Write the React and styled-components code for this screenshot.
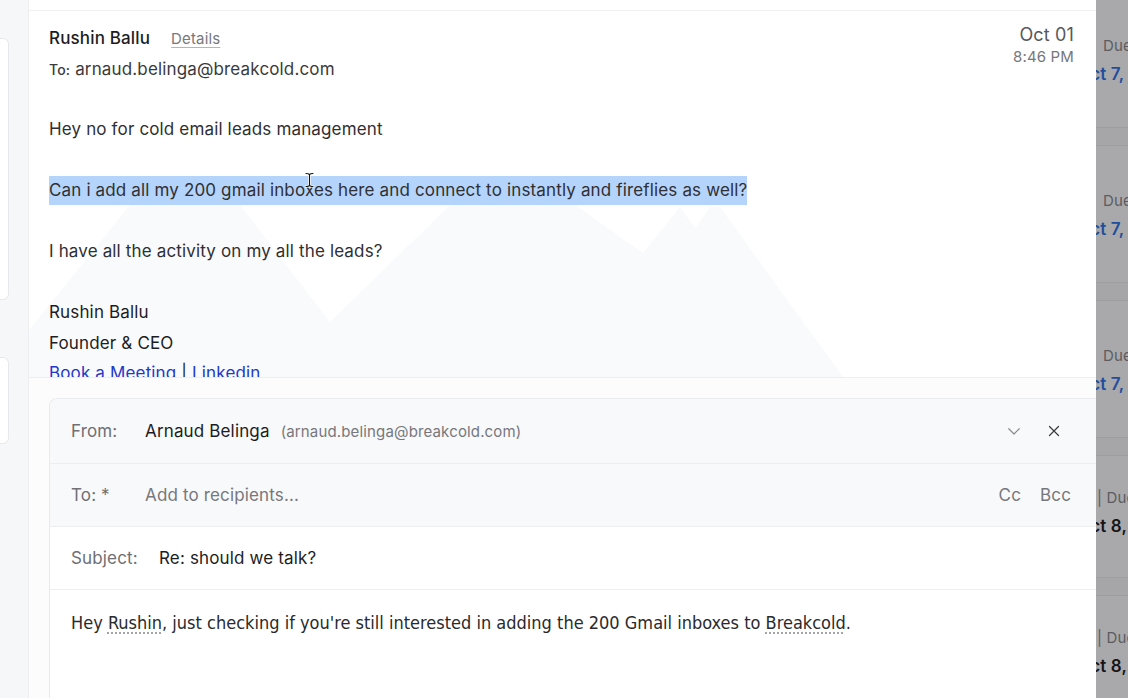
import React from "react";
import styled, { createGlobalStyle } from "styled-components";

const mountains = encodeURIComponent(
  `<svg xmlns="http://www.w3.org/2000/svg" width="1067" height="366"><polygon fill="#f9fafb" points="0,366 0,319 101,194 211,194 301,311 421,194 546,194 614,242 651,196 666,217 681,196 691,196 814,366"/></svg>`
);

const sideCards = [
  { height: 138, top: 46, indent: 7, due: "Due", date: "Oct 7, 2024", blue: true },
  { height: 138, top: 46, indent: 7, due: "Due", date: "Oct 7, 2024", blue: true },
  { height: 138, top: 46, indent: 7, due: "Due", date: "Oct 7, 2024", blue: true },
  { height: 123, top: 33, indent: 1, due: "| Due", date: "Oct 8, 2024", blue: false },
  { height: 123, top: 33, indent: 1, due: "| Due", date: "Oct 8, 2024", blue: false },
];

class App extends React.Component {
  render() {
    return (
      <>
        <GlobalStyle />
        <Page>
          <Gutter>
            <GutterCard height={260} />
            <GutterCard height={85} />
          </Gutter>
          <Main>
            <TopStrip />
            <Message>
              <Header>
                <div>
                  <Sender>
                    <SenderName>Rushin Ballu</SenderName>
                    <Details>Details</Details>
                  </Sender>
                  <ToLine>
                    <ToLabel>To:</ToLabel> arnaud.belinga@breakcold.com
                  </ToLine>
                </div>
                <DateBlock>
                  <DateText>Oct 01</DateText>
                  <TimeText>8:46 PM</TimeText>
                </DateBlock>
              </Header>
              <Body>
                <Para>Hey no for cold email leads management</Para>
                <Para>
                  <Selected>
                    Can i add all my 200 gmail inboxes here and connect to
                    instantly and fireflies as well?
                    <Cursor>
                      <svg width="9" height="16" viewBox="0 0 9 16" fill="none" strokeLinecap="round">
                        <path d="M1 1.5c1.5 0 3.5 0 3.5 1.5v10c0 1.5-2 1.5-3.5 1.5M8 1.5c-1.5 0-3.5 0-3.5 1.5v10c0 1.5 2 1.5 3.5 1.5" stroke="#ffffff" strokeWidth="2.6" />
                        <path d="M1 1.5c1.5 0 3.5 0 3.5 1.5v10c0 1.5-2 1.5-3.5 1.5M8 1.5c-1.5 0-3.5 0-3.5 1.5v10c0 1.5 2 1.5 3.5 1.5" stroke="#111111" strokeWidth="1.1" />
                      </svg>
                    </Cursor>
                  </Selected>
                </Para>
                <Para>I have all the activity on my all the leads?</Para>
                <Signature>
                  <div>Rushin Ballu</div>
                  <div>Founder &amp; CEO</div>
                  <div>
                    <Link>Book a Meeting</Link> | <Link>Linkedin</Link>
                  </div>
                </Signature>
              </Body>
            </Message>
            <Compose>
              <Card>
                <Field height={64} tint>
                  <Label width={74}>From:</Label>
                  <Value>Arnaud Belinga</Value>
                  <FromEmail>(arnaud.belinga@breakcold.com)</FromEmail>
                  <Actions>
                    <IconButton>
                      <svg width="18" height="18" viewBox="0 0 24 24" fill="none" stroke="#8c8c90" strokeWidth="1.6" strokeLinecap="round" strokeLinejoin="round">
                        <path d="M5 9l7 7 7-7" />
                      </svg>
                    </IconButton>
                    <IconButton>
                      <svg width="18" height="18" viewBox="0 0 24 24" fill="none" stroke="#3a3a3c" strokeWidth="1.6" strokeLinecap="round">
                        <path d="M18 6L6 18M6 6l12 12" />
                      </svg>
                    </IconButton>
                  </Actions>
                </Field>
                <Field height={62} tint>
                  <Label width={74}>To: *</Label>
                  <Placeholder>Add to recipients...</Placeholder>
                  <CopyLinks>
                    <span>Cc</span>
                    <span>Bcc</span>
                  </CopyLinks>
                </Field>
                <Field height={62}>
                  <Label width={88}>Subject:</Label>
                  <Value>Re: should we talk?</Value>
                </Field>
                <Draft>
                  Hey <Misspelled>Rushin</Misspelled>, just checking if you're
                  still interested in adding the 200 Gmail inboxes to{" "}
                  <Misspelled>Breakcold</Misspelled>.
                </Draft>
              </Card>
            </Compose>
          </Main>
          <Sidebar>
            {sideCards.map((c, i) => (
              <SideCard key={i} height={c.height} top={c.top}>
                <Due indent={c.indent}>{c.due}</Due>
                <DueDate blue={c.blue}>{c.date}</DueDate>
              </SideCard>
            ))}
          </Sidebar>
        </Page>
      </>
    );
  }
}

const GlobalStyle = createGlobalStyle`
  html, body {
    margin: 0;
    padding: 0;
    background: #ffffff;
  }
  body {
    font-family: "Inter", "Noto Sans", sans-serif;
    letter-spacing: 0.15px;
    -webkit-font-smoothing: antialiased;
  }
`;

const Page = styled.div`
  display: flex;
  width: 1128px;
  height: 698px;
  overflow: hidden;
`;

const Gutter = styled.div`
  width: 28px;
  flex-shrink: 0;
  background: #f6f7f9;
  display: flex;
  flex-direction: column;
  gap: 57px;
  padding-top: 38px;
  box-sizing: border-box;
`;

const GutterCard = styled.div`
  width: 8px;
  height: ${(p) => p.height}px;
  background: #ffffff;
  border: 1px solid #e6e8eb;
  border-left: none;
  border-radius: 0 6px 6px 0;
`;

const Main = styled.div`
  width: 1068px;
  flex-shrink: 0;
  display: flex;
  flex-direction: column;
  border-left: 1px solid #eceef1;
  box-sizing: border-box;
  background: #ffffff;
  overflow: hidden;
`;

const TopStrip = styled.div`
  height: 10px;
  border-bottom: 1px solid #eef0f2;
`;

const Message = styled.div`
  height: 366px;
  flex-shrink: 0;
  overflow: hidden;
  padding: 0 22px 0 20px;
  border-bottom: 1px solid #eceef1;
  background: #ffffff url("data:image/svg+xml,${mountains}") no-repeat 0 0;
`;

const Header = styled.div`
  display: flex;
  justify-content: space-between;
  align-items: flex-start;
  padding-top: 17px;
`;

const Sender = styled.div`
  display: flex;
  align-items: baseline;
  line-height: 20px;
`;

const SenderName = styled.span`
  font-size: 17px;
  font-weight: 500;
  color: #1d1d1f;
`;

const Details = styled.span`
  margin-left: 21px;
  font-size: 15px;
  color: #77777c;
  text-decoration: underline;
  text-underline-offset: 3px;
  text-decoration-color: #b5b5b9;
`;

const ToLine = styled.div`
  margin-top: 10px;
  line-height: 20px;
  font-size: 17px;
  color: #3a3a3c;
`;

const ToLabel = styled.span`
  font-size: 14px;
  font-weight: 500;
`;

const DateBlock = styled.div`
  text-align: right;
  margin-top: -4px;
  line-height: 22px;
`;

const DateText = styled.div`
  font-size: 18px;
  color: #58585c;
`;

const TimeText = styled.div`
  font-size: 15px;
  color: #77777c;
`;

const Body = styled.div`
  margin-top: 34px;
  font-size: 17px;
  line-height: 30.5px;
  color: #2f2f33;
`;

const Para = styled.p`
  margin: 0 0 30.5px;
`;

const Selected = styled.span`
  position: relative;
  display: inline-block;
  line-height: 29px;
  background: #b5d4fb;
`;

const Cursor = styled.span`
  position: absolute;
  left: 256px;
  top: -4px;
  display: flex;
  pointer-events: none;
`;

const Signature = styled.div`
  color: #1d1d1f;
`;

const Link = styled.span`
  color: #2238c8;
`;

const Compose = styled.div`
  flex: 1;
  background: #fcfcfd;
  padding: 20px 0 0 20px;
  display: flex;
`;

const Card = styled.div`
  flex: 1;
  display: flex;
  flex-direction: column;
  background: #ffffff;
  border: 1px solid #e8eaed;
  border-right: none;
  border-bottom: none;
  border-radius: 8px 0 0 0;
  overflow: hidden;
`;

const Field = styled.div`
  display: flex;
  align-items: center;
  height: ${(p) => p.height}px;
  flex-shrink: 0;
  padding: 0 25px 0 21px;
  background: ${(p) => (p.tint ? "#f8f9fa" : "#ffffff")};
  border-bottom: 1px solid #eceef0;
  font-size: 17px;
`;

const Label = styled.span`
  width: ${(p) => p.width}px;
  flex-shrink: 0;
  color: #6f6f74;
`;

const Value = styled.span`
  color: #1d1d1f;
`;

const FromEmail = styled.span`
  margin-left: 11px;
  font-size: 15px;
  color: #77777c;
`;

const Placeholder = styled.span`
  color: #77777c;
`;

const Actions = styled.div`
  margin-left: auto;
  margin-right: 5px;
  display: flex;
  gap: 16px;
`;

const IconButton = styled.span`
  width: 24px;
  height: 24px;
  display: flex;
  align-items: center;
  justify-content: center;
`;

const CopyLinks = styled.div`
  margin-left: auto;
  display: flex;
  gap: 19px;
  color: #77777c;
`;

const Draft = styled.div`
  padding: 21px 21px;
  font-family: "Liberation Sans Narrow", "DejaVu Sans Condensed", "Roboto", sans-serif;
  font-stretch: condensed;
  font-size: 18px;
  letter-spacing: 0;
  line-height: 24px;
  color: #2a2a2d;
`;

const Misspelled = styled.span`
  text-decoration: underline dotted #9a9aa0;
  text-underline-offset: 4px;
`;

const Sidebar = styled.div`
  width: 32px;
  flex-shrink: 0;
  background: #a6a6a8;
  overflow: hidden;
  display: flex;
  flex-direction: column;
  gap: 17px;
  margin-top: -10px;
`;

const SideCard = styled.div`
  height: ${(p) => p.height}px;
  flex-shrink: 0;
  box-sizing: border-box;
  padding-top: ${(p) => p.top}px;
  background: #a9a9ab;
  border-top: 1px solid #9e9ea0;
  border-bottom: 1px solid #9e9ea0;
  white-space: nowrap;
`;

const Due = styled.div`
  padding-left: ${(p) => p.indent}px;
  font-size: 15px;
  line-height: 18px;
  color: #5c5c60;
`;

const DueDate = styled.div`
  margin-top: 9px;
  margin-left: -19px;
  font-size: 17px;
  line-height: 20px;
  font-weight: 600;
  color: ${(p) => (p.blue ? "#1f4f9c" : "#151517")};
`;

export default App;
